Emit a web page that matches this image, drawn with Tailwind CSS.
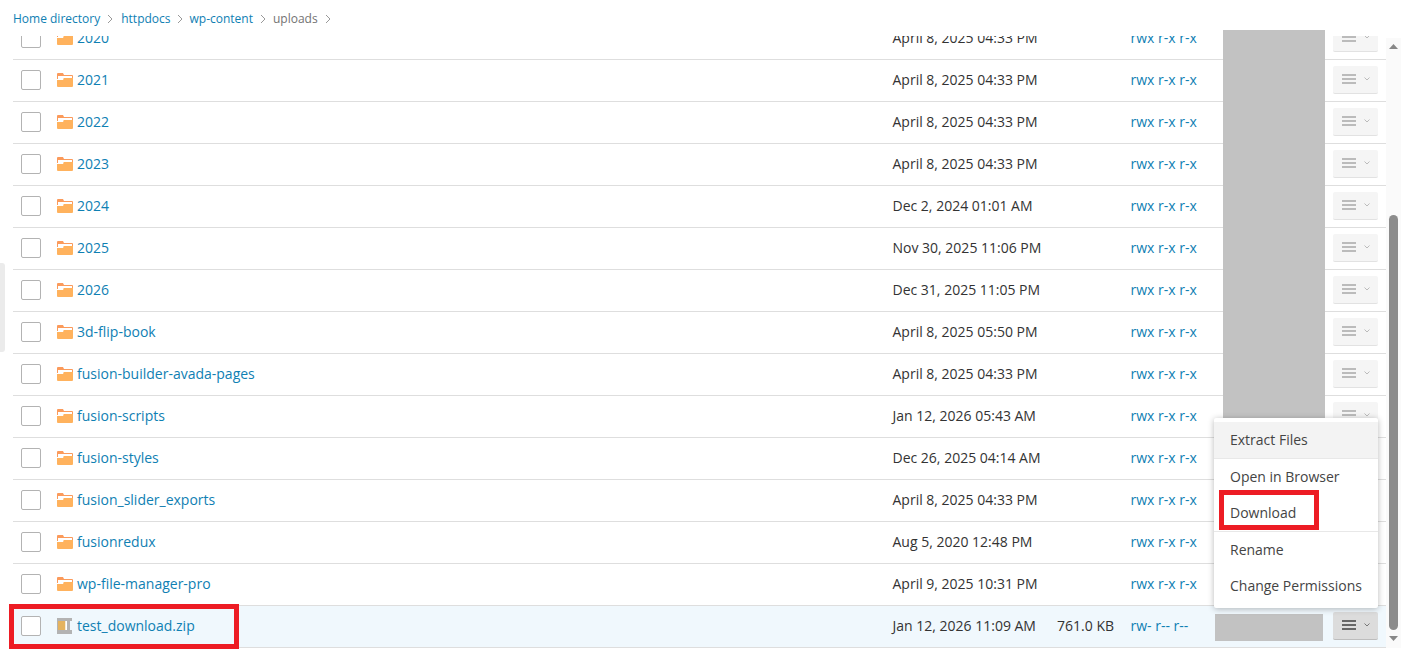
<!DOCTYPE html>
<html lang="en">
<head>
    <meta charset="UTF-8">
    <title>File Manager</title>
    <script src="https://cdn.jsdelivr.net/npm/@tailwindcss/browser@4"></script>
</head>
<body class="bg-white h-[660px] overflow-hidden relative font-['Open_Sans',sans-serif] text-[14px] text-[#333]">

    <!-- Breadcrumb -->
    <nav class="h-[36px] pl-[13px] pt-[10px] flex items-start text-[12px] leading-[18px] text-[#0f80b3]">
        <a>Home directory</a>
        <svg class="w-[21px] h-[10px] mt-[4px] text-[#999]" viewBox="0 0 21 10" fill="none" stroke="currentColor"><path d="M8 1l4 4-4 4"/></svg>
        <a>httpdocs</a>
        <svg class="w-[19px] h-[10px] mt-[4px] text-[#999]" viewBox="0 0 19 10" fill="none" stroke="currentColor"><path d="M7 1l4 4-4 4"/></svg>
        <a>wp-content</a>
        <svg class="w-[20px] h-[10px] mt-[4px] text-[#999]" viewBox="0 0 20 10" fill="none" stroke="currentColor"><path d="M8 1l4 4-4 4"/></svg>
        <span class="text-[#737373]">uploads</span>
        <svg class="w-[21px] h-[10px] mt-[4px] text-[#999]" viewBox="0 0 21 10" fill="none" stroke="currentColor"><path d="M8 1l4 4-4 4"/></svg>
    </nav>

    <!-- File list -->
    <div class="h-[624px] overflow-hidden pl-[13px] pr-[20px]">
        <div id="rows" class="-mt-[18px]"></div>
    </div>

    <!-- Masked owner column -->
    <div class="absolute left-[1223px] top-[30px] w-[102px] h-[410px] bg-[#c2c2c2]"></div>
    <div class="absolute left-[1215px] top-[614px] w-[108px] h-[27px] bg-[#c2c2c2]"></div>

    <!-- Sidebar handle -->
    <div class="absolute left-0 top-[263px] w-[5px] h-[89px] bg-[#ebebeb] rounded-r-[3px]"></div>

    <!-- Scrollbar -->
    <div class="absolute left-[1386px] top-[38px] w-[15px] h-[610px] bg-[#fafafa]">
        <svg class="absolute left-[3px] top-[6px] w-[9px] h-[5px] text-[#888]" viewBox="0 0 9 5" fill="currentColor"><path d="M4.5 0L9 5H0z"/></svg>
        <div class="absolute left-[3px] top-[177px] w-[9px] h-[415px] bg-[#8c8c8c] rounded-[5px]"></div>
        <svg class="absolute left-[3px] top-[598px] w-[9px] h-[5px] text-[#888]" viewBox="0 0 9 5" fill="currentColor"><path d="M0 0h9L4.5 5z"/></svg>
    </div>

    <!-- Actions menu -->
    <div class="absolute left-[1214px] top-[418px] w-[164px] h-[190px] py-[4px] bg-white rounded-[2px] shadow-[0_1px_6px_rgba(0,0,0,0.28)] text-[#444]">
        <div class="h-[36px] px-[16px] leading-[36px] bg-[#f3f3f3]">Extract Files</div>
        <div class="h-[1px] bg-[#e8e8e8]"></div>
        <div class="h-[36px] px-[16px] leading-[36px]">Open in Browser</div>
        <div class="h-[36px] px-[16px] leading-[36px]">Download</div>
        <div class="h-[1px] bg-[#e8e8e8]"></div>
        <div class="h-[36px] px-[16px] leading-[36px]">Rename</div>
        <div class="h-[36px] px-[16px] leading-[36px]">Change Permissions</div>
    </div>

    <!-- Red highlight boxes -->
    <div class="absolute left-[1219px] top-[490px] w-[100px] h-[40px] border-[5px] border-[#ed1c24]"></div>
    <div class="absolute left-[9px] top-[604px] w-[230px] h-[45px] border-[5px] border-[#ed1c24]"></div>

    <script>
        const files = [
            ['2020', 'April 8, 2025 04:33 PM'],
            ['2021', 'April 8, 2025 04:33 PM'],
            ['2022', 'April 8, 2025 04:33 PM'],
            ['2023', 'April 8, 2025 04:33 PM'],
            ['2024', 'Dec 2, 2024 01:01 AM'],
            ['2025', 'Nov 30, 2025 11:06 PM'],
            ['2026', 'Dec 31, 2025 11:05 PM'],
            ['3d-flip-book', 'April 8, 2025 05:50 PM'],
            ['fusion-builder-avada-pages', 'April 8, 2025 04:33 PM'],
            ['fusion-scripts', 'Jan 12, 2026 05:43 AM'],
            ['fusion-styles', 'Dec 26, 2025 04:14 AM'],
            ['fusion_slider_exports', 'April 8, 2025 04:33 PM'],
            ['fusionredux', 'Aug 5, 2020 12:48 PM'],
            ['wp-file-manager-pro', 'April 9, 2025 10:31 PM'],
        ];

        const folderIcon = `<svg class="w-[16px] h-[14px] shrink-0" viewBox="0 0 16 14">
            <path fill="#fb9a5b" d="M0 1a1 1 0 0 1 1-1h5l1 2h8a1 1 0 0 1 1 1v3H0z"/>
            <path fill="#fff" d="M1 3h14v2H7L6 7H1z"/>
            <path fill="#ffb25d" d="M0 7h6l1-2h9v8a1 1 0 0 1-1 1H1a1 1 0 0 1-1-1z"/>
        </svg>`;

        const zipIcon = `<svg class="w-[16px] h-[16px] shrink-0" viewBox="0 0 16 16">
            <path fill="#b3b3b3" d="M0 0h15v3H0zM0 12h15v4H0zM10 3h3v9h-3zM0 3h1v9H0z"/>
            <path fill="#e5b35f" d="M1 3h7.500v9H1z"/>
            <path fill="#fff" d="M8.500 3H10v9H8.500z"/>
        </svg>`;

        function menuButton(active) {
            const box = active ? 'bg-[#dcdcdc] border-[#bdbdbd]' : 'bg-[#f5f5f5] border-[#e2e2e2]';
            const bar = active ? 'bg-[#666]' : 'bg-[#bbb]';
            const arrow = active ? 'text-[#777]' : 'text-[#bbb]';
            return `<div class="w-[45px] h-[28px] pl-[9px] flex items-center gap-[8px] rounded-[2px] border-b ${box}">
                <div class="w-[14px] flex flex-col gap-[2px]">
                    <div class="h-[2px] ${bar}"></div><div class="h-[2px] ${bar}"></div><div class="h-[2px] ${bar}"></div>
                </div>
                <svg class="w-[6px] h-[4px] ${arrow}" viewBox="0 0 6 4" fill="none" stroke="currentColor"><path d="M.5.5L3 3 5.5.5"/></svg>
            </div>`;
        }

        function row(icon, name, date, size, perms, active) {
            return `<div class="h-[42px] pl-[8px] pb-[2px] flex items-center border-b border-[#dedede] ${active ? 'bg-[#f0f8fd]' : ''}">
                <div class="w-[20px] h-[20px] shrink-0 mr-[16px] bg-white border border-[#b3b3b3] rounded-[2px]"></div>
                ${icon}
                <a class="ml-[4px] flex-1 text-[#0f80b3]">${name}</a>
                <div class="w-[149.5px]">${date}</div>
                <div class="w-[72px] text-right">${size}</div>
                <div class="w-[202.5px] ml-[16.5px] text-[#0f80b3]">${perms}</div>
                ${menuButton(active)}
                <div class="w-[8px]"></div>
            </div>`;
        }

        let html = '';
        files.forEach(f => { html += row(folderIcon, f[0], f[1], '', 'rwx r-x r-x', false); });
        html += row(zipIcon, 'test_download.zip', 'Jan 12, 2026 11:09 AM', '761.0 KB', 'rw- r-- r--', true);
        document.getElementById('rows').innerHTML = html;
    </script>
</body>
</html>
